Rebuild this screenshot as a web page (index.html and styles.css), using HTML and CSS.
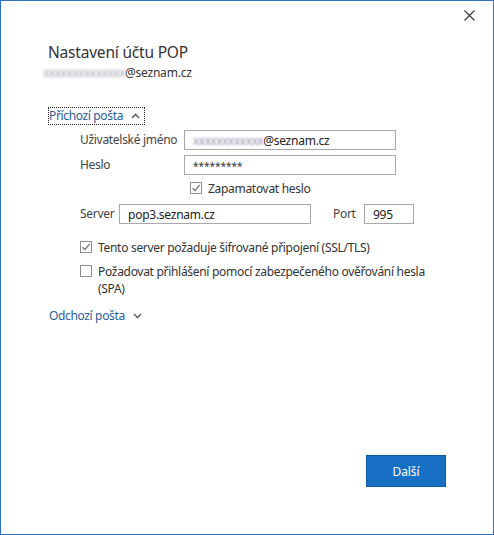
FILE: index.html
```html
<!DOCTYPE html>
<html lang="cs">
<head>
<meta charset="utf-8">
<title>Nastavení účtu POP</title>
<link rel="stylesheet" href="styles.css">
</head>
<body>
<div class="window">
  <div class="topbar">
    <button class="close" aria-label="Zavřít">
      <svg width="11" height="11" viewBox="0 0 11 11"><path d="M0.5 0.5 L10.5 10.5 M10.5 0.5 L0.5 10.5" stroke="#333" stroke-width="1.1" fill="none"/></svg>
    </button>
  </div>
  <div class="content">
    <h1 class="title">Nastavení účtu POP</h1>
    <div class="account"><span class="blur">xxxxxxxxxxxxxx</span>@seznam.cz</div>

    <div class="section-head focused">
      <span class="link">Příchozí pošta</span>
      <svg class="chev" width="9" height="6" viewBox="0 0 9 6"><path d="M1 5 L4.5 1.5 L8 5" stroke="#666" stroke-width="1.6" fill="none"/></svg>
    </div>

    <div class="form">
      <div class="row">
        <span class="label lbl-wide">Uživatelské jméno</span>
        <div class="input wide"><span class="blur small">xxxxxxxxxxxx</span>@seznam.cz</div>
      </div>
      <div class="row">
        <span class="label lbl-wide">Heslo</span>
        <div class="input wide pw">*********</div>
      </div>
      <label class="check remember">
        <span class="box checked"><svg width="10" height="10" viewBox="0 0 10 10"><path d="M1.5 5.2 L4 7.6 L8.6 1.8" stroke="#666" stroke-width="1.1" fill="none"/></svg></span>
        <span class="ctext">Zapamatovat heslo</span>
      </label>
      <div class="row server-row">
        <span class="label lbl-server">Server</span>
        <div class="input server">pop3.seznam.cz</div>
        <span class="label port-label">Port</span>
        <div class="input port">995</div>
      </div>
    </div>

    <div class="options">
      <label class="check">
        <span class="box checked"><svg width="10" height="10" viewBox="0 0 10 10"><path d="M1.5 5.2 L4 7.6 L8.6 1.8" stroke="#666" stroke-width="1.1" fill="none"/></svg></span>
        <span class="ctext">Tento server požaduje šifrované připojení (SSL/TLS)</span>
      </label>
      <label class="check">
        <span class="box"></span>
        <span class="ctext">Požadovat přihlášení pomocí zabezpečeného ověřování hesla<br>(SPA)</span>
      </label>
    </div>

    <div class="section-head outgoing">
      <span class="link">Odchozí pošta</span>
      <svg class="chev" width="9" height="6" viewBox="0 0 9 6"><path d="M1 1 L4.5 4.5 L8 1" stroke="#666" stroke-width="1.6" fill="none"/></svg>
    </div>

    <div class="spacer"></div>
    <div class="actions">
      <button class="primary">Další</button>
    </div>
  </div>
</div>
</body>
</html>
```

FILE: styles.css
```css
* { box-sizing: border-box; }
html, body { margin: 0; padding: 0; background: #fff; }
body {
  font-family: "Noto Sans", "Open Sans", sans-serif;
  font-size: 12px;
  color: #333;
}
.window {
  width: 494px;
  height: 535px;
  border: 1px solid #2b73c2;
  background: #fff;
  display: flex;
  flex-direction: column;
}
.topbar {
  display: flex;
  justify-content: flex-end;
  height: 30px;
  padding: 9px 18px 0 0;
}
.close {
  border: 0;
  background: transparent;
  padding: 0;
  width: 11px;
  height: 11px;
  display: flex;
}
.content {
  flex: 1;
  display: flex;
  flex-direction: column;
  padding: 0 47px 0 46px;
}
.title {
  margin: 11px 0 0 1px;
  font-size: 15.5px;
  font-weight: 400;
  line-height: 20px;
  color: #333;
  letter-spacing: -0.2px;
}
.account {
  margin-top: 3px;
  margin-left: -4px;
  line-height: 16px;
  font-size: 12px;
  letter-spacing: -0.2px;
  color: #333;
}
.blur {
  color: transparent;
  text-shadow: 0 0 3px rgba(120,120,140,0.7);
  letter-spacing: -0.5px;
}
.blur.small { text-shadow: 0 0 2.5px rgba(120,110,150,0.8); }
.section-head {
  display: flex;
  align-items: center;
  gap: 8px;
  align-self: flex-start;
  padding: 0 4px 0 0;
  height: 18px;
  margin-left: 1px;
  border: 1px solid transparent;
}
.section-head.focused {
  margin-top: 26px;
  border: 1px dotted #222;
}
.section-head.outgoing { margin-top: 10px; }
.link {
  color: #2d5d9a;
  font-size: 12px;
  letter-spacing: -0.35px;
  line-height: 16px;
}
.form {
  display: flex;
  flex-direction: column;
  padding-left: 33px;
  margin-top: 5px;
}
.row {
  display: flex;
  align-items: center;
  margin-bottom: 5px;
}
.label {
  color: #444;
  letter-spacing: -0.3px;
  line-height: 16px;
}
.lbl-wide { width: 104px; }
.lbl-server { width: 39px; }
.input {
  height: 20px;
  border: 1px solid #a9a9a9;
  padding: 0 8px;
  display: flex;
  align-items: center;
  letter-spacing: -0.25px;
  color: #222;
  background: #fff;
}
.wide { width: 212px; }
.pw { font-size: 10px; letter-spacing: 0; color: #333; padding-top: 2px; }
.check {
  display: flex;
  align-items: flex-start;
  gap: 6px;
}
.box {
  flex: none;
  width: 12px;
  height: 12px;
  border: 1px solid #8f8f8f;
  background: #fff;
  display: flex;
  align-items: center;
  justify-content: center;
  margin-top: 2px;
}
.ctext {
  line-height: 17px;
  color: #333;
  letter-spacing: -0.3px;
}
.remember {
  margin-left: 110px;
  margin-top: 0;
  height: 20px;
}
.server-row { margin-top: 4px; }
.server { width: 192px; }
.port-label { margin-left: 22px; width: 31px; }
.port { width: 50px; }
.options {
  display: flex;
  flex-direction: column;
  gap: 7px;
  padding-left: 33px;
  margin-top: 10px;
}
.spacer { flex: 1; }
.actions {
  display: flex;
  justify-content: flex-end;
  padding-bottom: 47px;
}
.primary {
  width: 80px;
  height: 32px;
  background: #176fc3;
  border: 1px solid #0f5aa3;
  color: #fff;
  font-family: "Noto Sans", "Open Sans", sans-serif;
  font-size: 12px;
  letter-spacing: -0.1px;
}
```
